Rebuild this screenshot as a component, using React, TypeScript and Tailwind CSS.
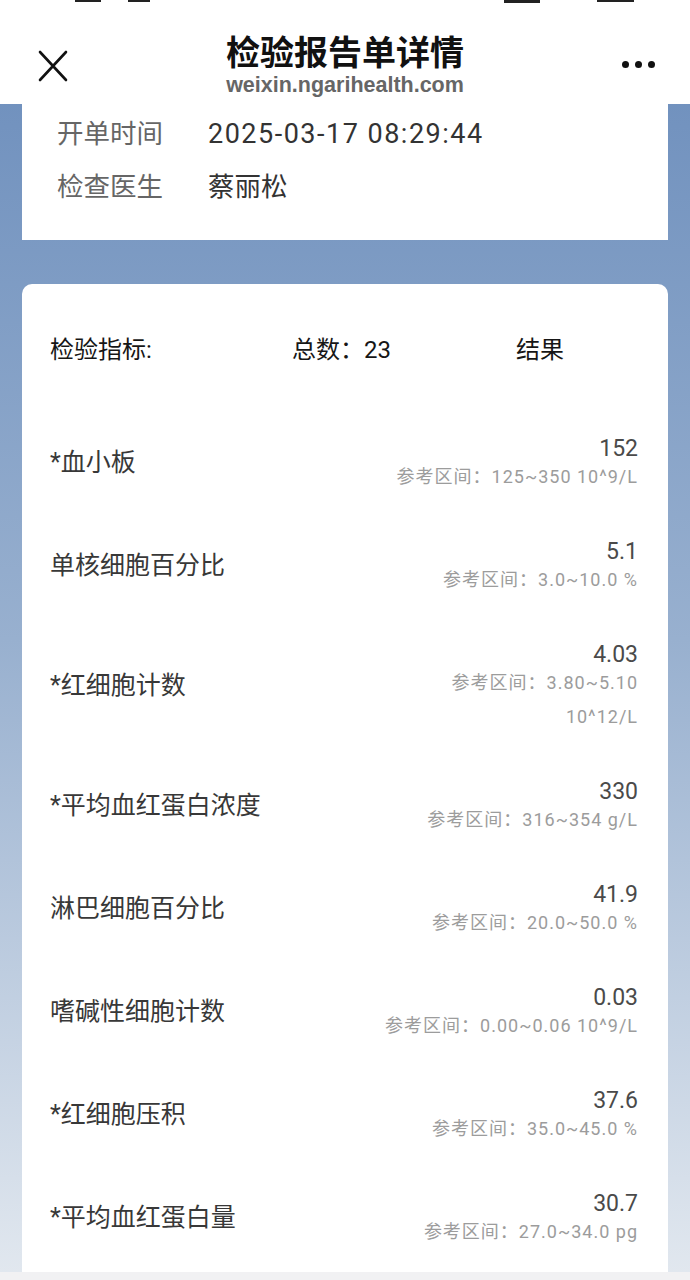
const items = [
  { name: "*血小板", value: "152", ref: "参考区间：125~350 10^9/L" },
  { name: "单核细胞百分比", value: "5.1", ref: "参考区间：3.0~10.0 %" },
  { name: "*红细胞计数", value: "4.03", ref: "参考区间：3.80~5.10", unit: "10^12/L" },
  { name: "*平均血红蛋白浓度", value: "330", ref: "参考区间：316~354 g/L" },
  { name: "淋巴细胞百分比", value: "41.9", ref: "参考区间：20.0~50.0 %" },
  { name: "嗜碱性细胞计数", value: "0.03", ref: "参考区间：0.00~0.06 10^9/L" },
  { name: "*红细胞压积", value: "37.6", ref: "参考区间：35.0~45.0 %" },
  { name: "*平均血红蛋白量", value: "30.7", ref: "参考区间：27.0~34.0 pg" },
];

const font = "font-['Roboto','Noto_Sans_CJK_SC',sans-serif]";

export default function App() {
  return (
    <div
      className={`w-[690px] h-[1280px] overflow-hidden flex flex-col bg-linear-to-b from-[#6a8cbb] via-[#98b0cf] to-[#e2e8ef] ${font}`}
    >
      {/* nav bar */}
      <div className="relative h-[104px] shrink-0 bg-white flex flex-col items-center">
        <div className="absolute top-0 left-[75px] h-[2px] w-[26px] bg-[#222]" />
        <div className="absolute top-0 left-[128px] h-[2px] w-[22px] bg-[#222]" />
        <div className="absolute top-0 left-[504px] h-[3px] w-[36px] bg-[#222]" />
        <div className="absolute top-0 left-[597px] h-[2px] w-[37px] bg-[#222]" />

        <svg
          className="absolute left-[37px] top-[50px]"
          width="32"
          height="32"
          viewBox="0 0 32 32"
          fill="none"
          stroke="#111"
          strokeWidth="2.6"
          strokeLinecap="round"
        >
          <path d="M3 2 L29 30 M29 2 L3 30" />
        </svg>

        <h1 className="mt-[31px] text-[34px] leading-[40px] font-bold text-[#111] font-['Noto_Sans_CJK_SC',sans-serif]">
          检验报告单详情
        </h1>
        <div className="mt-[2px] text-[21.5px] leading-[24px] font-bold text-[#666] font-['Liberation_Sans',sans-serif]">
          weixin.ngarihealth.com
        </div>

        <div className="absolute right-[35px] top-[61px] flex gap-[6px]">
          <span className="w-[7px] h-[7px] rounded-full bg-[#111]" />
          <span className="w-[7px] h-[7px] rounded-full bg-[#111]" />
          <span className="w-[7px] h-[7px] rounded-full bg-[#111]" />
        </div>
      </div>

      {/* order info */}
      <div className="mx-[22px] h-[136px] shrink-0 bg-white pt-[12px] pl-[35px] flex flex-col gap-[17px]">
        <div className="flex text-[26.5px] leading-[36px]">
          <span className="w-[151px] text-[#666]">开单时间</span>
          <span className="text-[27px] text-[#333] tracking-[1.5px]">2025-03-17 08:29:44</span>
        </div>
        <div className="flex text-[26.5px] leading-[36px]">
          <span className="w-[151px] text-[#666]">检查医生</span>
          <span className="text-[#333]">蔡丽松</span>
        </div>
      </div>

      {/* results */}
      <div className="mx-[22px] mt-[44px] flex-1 bg-white rounded-t-[10px] pl-[28px] pr-[30px] pt-[50px]">
        <div className="flex items-center h-[32px] text-[24px] text-[#161616]">
          <span className="w-[242px]">检验指标:</span>
          <span className="w-[224px]">总数：23</span>
          <span>结果</span>
        </div>

        <div className="mt-[45px] flex flex-col">
          {items.map((it) => (
            <div key={it.name} className="flex items-center justify-between py-[24px]">
              <span className="text-[25px] leading-[32px] text-[#383838]">{it.name}</span>
              <div className="flex flex-col items-end">
                <span className="text-[23px] leading-[28px] text-[#4a4a4a]">{it.value}</span>
                <span className="text-[18px] leading-[27px] tracking-[1px] text-[#9c9c9c]">{it.ref}</span>
                {it.unit && (
                  <span className="mt-[7px] text-[18px] leading-[27px] tracking-[1px] text-[#9c9c9c]">
                    {it.unit}
                  </span>
                )}
              </div>
            </div>
          ))}
        </div>
      </div>
      <div className="h-[8px] shrink-0 bg-[#f1f1f3]" />
    </div>
  );
}
